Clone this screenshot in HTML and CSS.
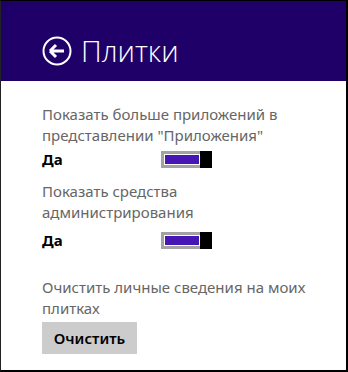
FILE: index.html
```html
<!DOCTYPE html>
<html lang="ru">
<head>
<meta charset="utf-8">
<link rel="stylesheet" href="styles.css">
</head>
<body>
<div class="frame">
  <header class="header">
    <svg class="back" width="30" height="30" viewBox="0 0 30 30">
      <circle cx="15" cy="15" r="13.5" fill="none" stroke="#fff" stroke-width="2"/>
      <path d="M8 15 L14 9 M8 15 L14 21 M8 15 H22" fill="none" stroke="#fff" stroke-width="3" stroke-linecap="butt" stroke-linejoin="miter"/>
    </svg>
    <h1 class="title">Плитки</h1>
  </header>
  <main class="content">
    <section class="setting first">
      <div class="label">Показать больше приложений в представлении "Приложения"</div>
      <div class="row">
        <span class="value">Да</span>
        <span class="toggle"><span class="track"><span class="fill"></span></span><span class="thumb"></span></span>
      </div>
    </section>
    <section class="setting second">
      <div class="label">Показать средства администрирования</div>
      <div class="row">
        <span class="value">Да</span>
        <span class="toggle"><span class="track"><span class="fill"></span></span><span class="thumb"></span></span>
      </div>
    </section>
    <section class="setting third">
      <div class="label">Очистить личные сведения на моих плитках</div>
      <button class="btn">Очистить</button>
    </section>
  </main>
</div>
</body>
</html>
```
FILE: styles.css
```css
html, body {
  margin: 0;
  padding: 0;
  background: #fff;
}
.frame {
  width: 348px;
  height: 372px;
  box-sizing: border-box;
  border-top: 1px solid #000;
  border-left: 1px solid #222;
  border-right: 2px solid #000;
  border-bottom: 2px solid #000;
  font-family: "Noto Sans", "Open Sans", sans-serif;
  overflow: hidden;
}
.header {
  height: 80px;
  box-sizing: border-box;
  background: #1f0068;
  display: flex;
  align-items: center;
  padding: 35px 0 0 41px;
  gap: 9px;
  align-content: flex-start;
  flex-wrap: wrap;
}
.back {
  display: block;
  flex: none;
}
.title {
  margin: 0;
  font-family: "Open Sans", "Noto Sans", sans-serif;
  font-weight: 300;
  font-size: 29px;
  line-height: 30px;
  color: #fff;
}
.content {
  padding: 23px 0 0 41px;
}
.label {
  font-size: 15px;
  line-height: 21px;
  color: #666;
  width: 270px;
}
.setting.second { margin-top: 13px; }
.setting.third { margin-top: 28px; }
.row {
  display: flex;
  align-items: center;
  margin-top: 5px;
}
.second .row { margin-top: 9px; }
.value {
  width: 119px;
  font-size: 15px;
  line-height: 17px;
  font-weight: 700;
  color: #000;
}
.toggle {
  display: flex;
  width: 51px;
  height: 17px;
}
.track {
  flex: 1;
  display: flex;
  border: 3px solid #a3a3a3;
  border-right: none;
  padding: 1px;
  background: #fff;
}
.fill {
  flex: 1;
  background: #4617b4;
}
.thumb {
  width: 12px;
  background: #000;
}
.btn {
  margin-top: 3px;
  width: 95px;
  height: 32px;
  border: none;
  background: #cccccc;
  font-family: "Noto Sans", "Open Sans", sans-serif;
  font-size: 15px;
  font-weight: 600;
  color: #000;
  padding: 0;
}
```
